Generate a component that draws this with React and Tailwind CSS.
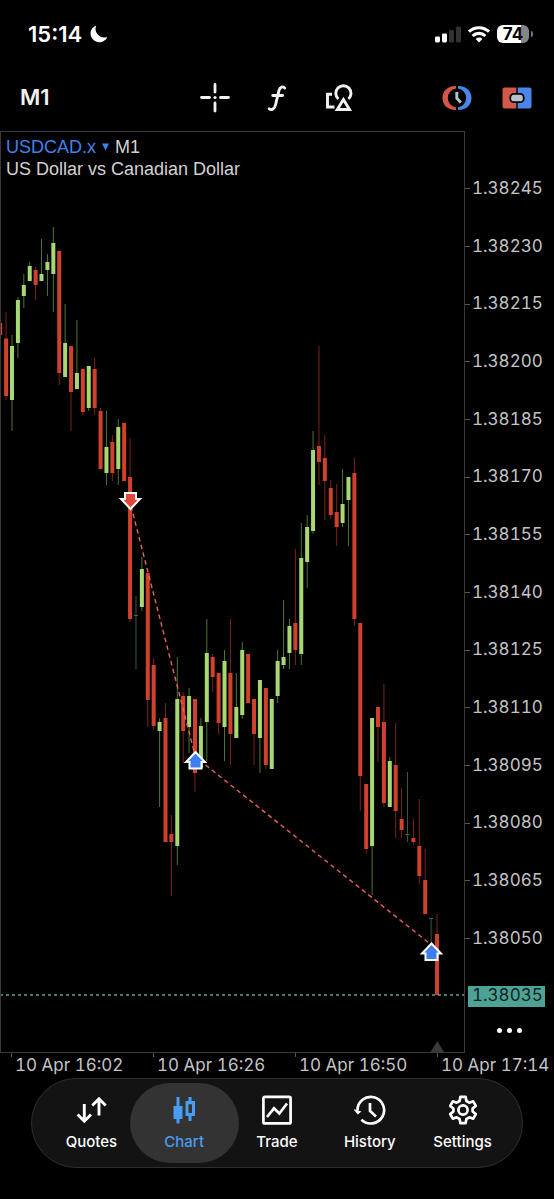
import React from "react";

const FIRST_X = 0.2;
const STEP = 5.903;

// direction (d = doji), high, body top, body bottom, low
const CANDLES = [
  ["r", 323, 323, 335, 335],
  ["r", 312, 338.5, 396, 400],
  ["g", 335, 346, 400, 431],
  ["g", 297, 300, 343, 358],
  ["g", 274, 285, 296, 308],
  ["g", 262, 266, 281, 281],
  ["r", 267, 270, 285, 300],
  ["g", 239, 274, 281, 281],
  ["g", 254, 262, 270, 296],
  ["g", 227, 243, 274, 312],
  ["r", 251, 251, 373, 385],
  ["g", 304, 343, 377, 377],
  ["r", 346, 346, 392, 431],
  ["g", 320, 373, 389, 389],
  ["r", 369, 369, 412, 415],
  ["g", 366, 366, 408, 411],
  ["r", 358, 369, 408, 415],
  ["r", 408, 411, 469, 469],
  ["g", 411, 447, 473, 485],
  ["r", 435, 442, 473, 481],
  ["g", 419, 427, 469, 485],
  ["r", 423, 423, 481, 481],
  ["r", 438, 477, 619, 622],
  ["d", 596, 615, 616, 669],
  ["g", 557, 569, 607, 611],
  ["r", 573, 573, 700, 727],
  ["r", 658, 665, 726, 730],
  ["g", 718, 722, 731, 807],
  ["r", 703, 718, 842, 842],
  ["r", 815, 834, 842, 896],
  ["g", 657, 699, 846, 865],
  ["r", 692, 696, 731, 763],
  ["g", 688, 696, 727, 753],
  ["r", 699, 699, 773, 792],
  ["g", 718, 726, 768, 768],
  ["g", 619, 653, 722, 761],
  ["r", 654, 657, 677, 692],
  ["r", 673, 673, 723, 734],
  ["g", 650, 661, 727, 761],
  ["r", 619, 673, 734, 765],
  ["g", 673, 707, 738, 738],
  ["g", 642, 650, 715, 719],
  ["r", 654, 654, 703, 703],
  ["r", 699, 699, 734, 765],
  ["g", 680, 680, 738, 773],
  ["r", 688, 688, 765, 769],
  ["g", 699, 699, 769, 769],
  ["g", 650, 661, 696, 703],
  ["g", 600, 657, 665, 669],
  ["g", 619, 626, 653, 669],
  ["r", 549, 623, 650, 665],
  ["g", 523, 558, 654, 665],
  ["g", 515, 527, 562, 588],
  ["g", 431, 450, 531, 534],
  ["r", 346, 446, 462, 485],
  ["r", 435, 458, 481, 520],
  ["r", 480, 488, 515, 519],
  ["r", 484, 512, 527, 546],
  ["g", 469, 504, 523, 527],
  ["g", 477, 477, 500, 546],
  ["r", 458, 473, 619, 626],
  ["r", 623, 623, 776, 811],
  ["r", 784, 784, 849, 853],
  ["g", 718, 718, 846, 895],
  ["r", 707, 707, 727, 762],
  ["r", 684, 722, 803, 807],
  ["g", 757, 761, 807, 807],
  ["r", 723, 765, 811, 838],
  ["r", 788, 819, 830, 838],
  ["d", 772, 834, 835, 842],
  ["r", 819, 838, 842, 845],
  ["r", 799, 846, 876, 884],
  ["r", 849, 880, 914, 914],
  ["d", 918, 918, 919, 948],
  ["r", 914, 934, 995, 995],
];

const BODY = { r: "#cf412c", g: "#a8d873", d: "#3f6b55" };
const WICK = { r: "#7c2419", g: "#4f7434", d: "#35574a" };

const PRICES = [
  "1.38245", "1.38230", "1.38215", "1.38200", "1.38185", "1.38170", "1.38155",
  "1.38140", "1.38125", "1.38110", "1.38095", "1.38080", "1.38065", "1.38050",
];

const TIMES = ["10 Apr 16:02", "10 Apr 16:26", "10 Apr 16:50", "10 Apr 17:14"];

function BuyMarker({ x, y }) {
  return (
    <path
      transform={`translate(${x} ${y})`}
      d="M0 -8.500 L9.500 1.500 H6 V8 H-6 V1.500 H-9.500 Z"
      fill="#3d7ff0"
      stroke="#fff"
      strokeWidth="2"
    />
  );
}

function SellMarker({ x, y }) {
  return (
    <path
      transform={`translate(${x} ${y})`}
      d="M0 8.500 L9.500 -1.500 H5.500 V-7.500 H-5.500 V-1.500 H-9.500 Z"
      fill="#e2483a"
      stroke="#fff"
      strokeWidth="2"
    />
  );
}

function Candles() {
  return (
    <svg
      className="block h-full w-full"
      viewBox="1 132 463 920"
      preserveAspectRatio="none"
      role="img"
      aria-label="USDCAD.x one minute candles"
    >
      {CANDLES.map(([kind, high, top, bottom, low], i) => {
        const x = FIRST_X + i * STEP;
        return (
          <g key={i}>
            <rect x={x - 0.5} y={high} width="1" height={low - high} fill={WICK[kind]} />
            <rect x={x - 2} y={top} width="4" height={bottom - top} fill={BODY[kind]} />
          </g>
        );
      })}
      <path
        d="M131 506 L195.500 757 L431.500 945"
        fill="none"
        stroke="#e8635a"
        strokeWidth="1.4"
        strokeDasharray="4.500 3.500"
      />
      <path d="M0 995 H465" stroke="#5aa592" strokeWidth="1.6" strokeDasharray="3 3" />
      <SellMarker x={130.5} y={500.5} />
      <BuyMarker x={195.5} y={760.5} />
      <BuyMarker x={431.5} y={952} />
      <path d="M437.300 1041 L444 1052 H430.500 Z" fill="#3a3a3a" />
    </svg>
  );
}

function StatusBar() {
  return (
    <div className="flex h-16 items-center justify-between pt-1 pr-[21px] pl-7">
      <div className="flex items-center gap-2">
        <span className="text-[22px] font-semibold text-white">15:14</span>
        <svg width="18" height="18" viewBox="0 0 18 18" aria-hidden="true">
          <path d="M6.300 0.400 A8.700 8.700 0 1 0 17.300 11.900 A8.600 8.600 0 0 1 6.300 0.400 Z" fill="#fff" />
        </svg>
      </div>
      <div className="flex items-center gap-[7px]">
        <svg width="26" height="17" viewBox="0 0 26 17" aria-hidden="true">
          <rect x="0" y="10.500" width="5" height="6" rx="1.400" fill="#fff" />
          <rect x="7" y="7.500" width="5" height="9" rx="1.400" fill="#fff" />
          <rect x="14" y="4" width="5" height="12.500" rx="1.400" fill="#333" />
          <rect x="21" y="0.500" width="5" height="16" rx="1.400" fill="#333" />
        </svg>
        <svg width="22" height="17" viewBox="0 0 22 17" aria-hidden="true" fill="none" stroke="#fff" strokeWidth="3.100">
          <path d="M1 5.700 A14.500 14.500 0 0 1 21 5.700" />
          <path d="M4.600 10 A9.200 9.200 0 0 1 17.400 10" />
          <path d="M7.600 13 Q11 10.200 14.400 13 L11 16.600 Z" fill="#fff" stroke="none" />
        </svg>
        <div className="flex items-center gap-[2px]">
          <div className="flex h-[18px] w-8 items-center justify-center rounded-[6px] bg-linear-to-r from-white from-75% to-[#858585] to-75%">
            <span className="text-[17px] leading-none font-bold text-black">74</span>
          </div>
          <div className="h-[6px] w-[2px] rounded-r-full bg-[#777]" />
        </div>
      </div>
    </div>
  );
}

function Toolbar() {
  return (
    <div className="grid h-[67px] grid-cols-[1fr_auto_1fr] items-center">
      <button className="justify-self-start pl-5 text-[22px] font-semibold text-[#f2f2f2]">M1</button>
      <div className="flex items-center">
        <button aria-label="Crosshair" className="flex w-[62px] justify-center">
          <svg width="30" height="30" viewBox="0 0 30 30" stroke="#f2f2f2" strokeWidth="2.800" strokeLinecap="round">
            <path d="M15 1.500 V9 M15 20 V28 M1.500 14.500 H9.500 M20.500 14.500 H28.500" />
            <circle cx="15" cy="14.500" r="1.600" fill="#f2f2f2" stroke="none" />
          </svg>
        </button>
        <button aria-label="Indicators" className="flex w-[62px] justify-center">
          <svg width="20" height="28" viewBox="0 0 20 28" fill="none" stroke="#f2f2f2" strokeWidth="2.900" strokeLinecap="round">
            <path d="M17.700 4 C16.300 2 13 2.600 12 6.400 L8.600 20.500 C7.600 24.900 4.400 26.800 2.200 24.800" />
            <path d="M5.800 11.500 H15.600" />
          </svg>
        </button>
        <button aria-label="Objects" className="flex w-[62px] justify-center">
          <svg width="28" height="30" viewBox="0 0 28 30" fill="none" stroke="#f2f2f2" strokeWidth="2.900">
            <path d="M7 11.300 H2.500 V24 H9.500" />
            <path d="M13.400 16 A7.600 7.600 0 1 1 23.400 16" />
            <path d="M18.400 16.500 L24.500 26.500 H12.300 Z" />
          </svg>
        </button>
      </div>
      <div className="flex items-center justify-self-end pr-[7px]">
        <button aria-label="Trading sessions" className="flex w-[61px] justify-center">
          <svg width="30" height="26" viewBox="0 0 30 26" aria-hidden="true">
            <path d="M14 1 C4.500 1 0.500 7 0.500 13 C0.500 19 4.500 25 14 25 V22.500 A9.600 9.600 0 0 1 14 3.500 Z" fill="#d2594a" />
            <path d="M16 1 C25.500 1 29.500 7 29.500 13 C29.500 19 25.500 25 16 25 V22.500 A9.600 9.600 0 0 0 16 3.500 Z" fill="#4a86ea" />
            <path d="M14.800 7 V13.300 L18.800 17.600" fill="none" stroke="#b9c2c9" strokeWidth="2.900" />
          </svg>
        </button>
        <button aria-label="One click trading" className="flex w-[60px] justify-center">
          <svg width="30" height="22" viewBox="0 0 30 22" aria-hidden="true">
            <path d="M2.500 0.500 H14.300 V21.500 H2.500 A2 2 0 0 1 0.500 19.500 V2.500 A2 2 0 0 1 2.500 0.500 Z" fill="#d2594a" />
            <path d="M15.700 0.500 H27.500 A2 2 0 0 1 29.500 2.500 V19.500 A2 2 0 0 1 27.500 21.500 H15.700 Z" fill="#4a86ea" />
            <rect x="8.300" y="6.800" width="13.400" height="8.400" rx="3.500" fill="#b9c2c9" stroke="#000" strokeWidth="1.800" />
          </svg>
        </button>
      </div>
    </div>
  );
}

function PriceAxis() {
  return (
    <div className="flex w-[89px] shrink-0 flex-col pt-[29px]">
      <ul className="grid h-[865px] grid-rows-15">
        {PRICES.map((price) => (
          <li key={price} className="flex items-center gap-[2px]">
            <span className="h-px w-[5px] bg-[#555]" />
            <span className="text-[17px] text-[#c4c4c4] tabular-nums">{price}</span>
          </li>
        ))}
        <li className="flex items-center pl-[3px]">
          <span className="flex h-[21px] w-[77px] items-center bg-[#4fa396] pl-1 text-[17px] text-[#0d2420] tabular-nums">
            1.38035
          </span>
        </li>
      </ul>
      <button aria-label="More" className="flex h-[10px] items-center justify-center gap-[5px]">
        <span className="size-[5px] rounded-full bg-white" />
        <span className="size-[5px] rounded-full bg-white" />
        <span className="size-[5px] rounded-full bg-white" />
      </button>
    </div>
  );
}

function TimeAxis() {
  return (
    <ul className="grid h-[25px] grid-cols-[142fr_142fr_142fr_117fr] pl-[11px]">
      {TIMES.map((time) => (
        <li key={time} className="flex min-w-0 gap-[3px] whitespace-nowrap">
          <span className="h-1 w-px shrink-0 bg-[#555]" />
          <span className="text-[17px] leading-[25px] text-[#c4c4c4] tabular-nums">{time}</span>
        </li>
      ))}
    </ul>
  );
}

const QuotesIcon = () => (
  <svg width="32" height="32" viewBox="0 0 32 32" fill="none" stroke="currentColor" strokeWidth="2.900">
    <path d="M9.300 10 V27 M2.600 20.500 L9.300 27.200 L16 20.500" />
    <path d="M24 21.500 V4.500 M17.300 11.500 L24 4.800 L30.700 11.500" />
  </svg>
);

const ChartIcon = () => (
  <svg width="32" height="32" viewBox="0 0 32 32" fill="currentColor">
    <path d="M8.500 3 H11.500 V12 H14.500 V25 H11.500 V29.500 H8.500 V25 H5.500 V12 H8.500 Z" />
    <path fillRule="evenodd" d="M20.500 3 H23.500 V7 H27 V22 H23.500 V27 H20.500 V22 H17.500 V7 H20.500 Z M20.500 10.200 V19 H24 V10.200 Z" />
  </svg>
);

const TradeIcon = () => (
  <svg width="32" height="32" viewBox="0 0 32 32" fill="none" stroke="currentColor" strokeWidth="2.700">
    <rect x="2.400" y="2.800" width="27.200" height="26.600" rx="1.500" />
    <path d="M6 23 L13 14.300 L18.300 19.500 L26 9.500" />
  </svg>
);

const HistoryIcon = () => (
  <svg width="32" height="32" viewBox="0 0 32 32" fill="none" stroke="currentColor" strokeWidth="2.700">
    <path d="M3.500 16.500 A13.300 13.300 0 1 1 7.400 25.600" />
    <path d="M-1 14.800 L7.400 17.600 L3.800 20.400 Z" fill="currentColor" stroke="none" />
    <path d="M16 9 V17 L22 22.500" />
  </svg>
);

const SettingsIcon = () => (
  <svg width="32" height="32" viewBox="0 0 32 32" fill="none" stroke="currentColor" strokeWidth="2.700" strokeLinejoin="round">
    <path d="M13.400 2.800 H18.600 L19.400 7 L22.300 8.700 L26.200 7.300 L28.800 11.900 L25.600 14.500 V17.500 L28.800 20.100 L26.200 24.700 L22.300 23.300 L19.400 25 L18.600 29.200 H13.400 L12.600 25 L9.700 23.300 L5.800 24.700 L3.200 20.100 L6.400 17.500 V14.500 L3.200 11.900 L5.800 7.300 L9.700 8.700 L12.600 7 Z" />
    <circle cx="16" cy="16" r="4.600" />
  </svg>
);

const TABS = [
  { label: "Quotes", Icon: QuotesIcon },
  { label: "Chart", Icon: ChartIcon, active: true },
  { label: "Trade", Icon: TradeIcon },
  { label: "History", Icon: HistoryIcon },
  { label: "Settings", Icon: SettingsIcon },
];

function TabBar() {
  return (
    <nav className="mx-[31px] mb-8 grid h-[90px] grid-cols-5 rounded-full border border-[#2e2e2e] bg-[#131313] px-[13px] py-1">
      {TABS.map(({ label, Icon, active }) => (
        <button
          key={label}
          aria-current={active ? "page" : undefined}
          className={
            active
              ? "-mx-2 flex flex-col items-center justify-center gap-1 rounded-full bg-[#333] pt-[6px] pb-1 text-[#4a9df5]"
              : "flex flex-col items-center justify-center gap-1 pt-[6px] pb-1 text-white"
          }
        >
          <Icon />
          <span className="text-[15px] leading-6 font-medium">{label}</span>
        </button>
      ))}
    </nav>
  );
}

export default function App() {
  return (
    <main className="min-h-screen overflow-hidden bg-black font-['Inter',sans-serif]">
      <StatusBar />
      <Toolbar />
      <section className="flex">
        <div className="relative h-[922px] min-w-0 flex-1 border border-[#3a3a3a]">
          <Candles />
          <div className="absolute top-1 left-[5px] font-['Liberation_Sans',Arial,sans-serif] text-lg leading-[22px] text-[#d2d2d2]">
            <div className="flex items-center gap-[6px]">
              <button className="flex items-center gap-[6px] text-[#3f82ee]">
                USDCAD.x
                <svg width="7" height="8" viewBox="0 0 7 8" aria-hidden="true">
                  <path d="M0 0.500 H7 L3.500 7.500 Z" fill="currentColor" />
                </svg>
              </button>
              <span>M1</span>
            </div>
            <p>US Dollar vs Canadian Dollar</p>
          </div>
        </div>
        <PriceAxis />
      </section>
      <TimeAxis />
      <TabBar />
    </main>
  );
}
